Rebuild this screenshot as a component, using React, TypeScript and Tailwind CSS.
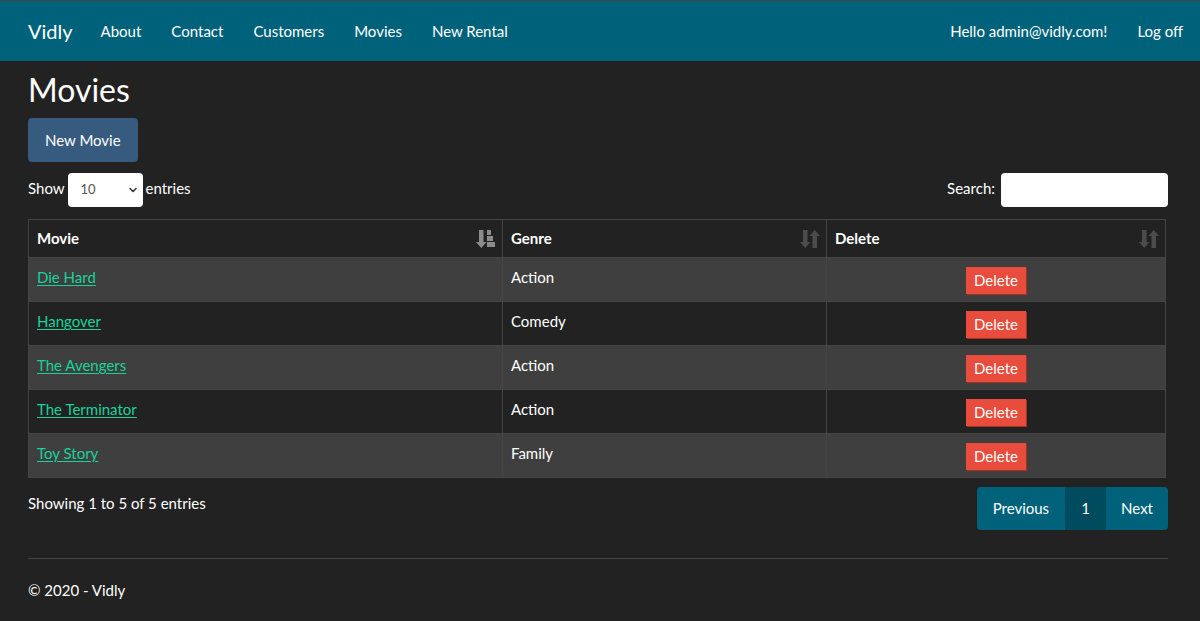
import { ChevronDown } from 'lucide-react';

const MOVIES = [
  { name: 'Die Hard', genre: 'Action' },
  { name: 'Hangover', genre: 'Comedy' },
  { name: 'The Avengers', genre: 'Action' },
  { name: 'The Terminator', genre: 'Action' },
  { name: 'Toy Story', genre: 'Family' },
];

function SortIcon({ active }: { active?: boolean }) {
  return (
    <svg width="20" height="20" viewBox="0 0 20 20" className="shrink-0">
      {/* down arrow */}
      <path d="M3 1h4.5v12h3L5.25 19 0 13h3z" fill={active ? '#8c8c8c' : '#4c4c4c'} />
      {active ? (
        <g fill="#8c8c8c">
          <rect x="11" y="1" width="4" height="5" />
          <rect x="11" y="7" width="6" height="5" />
          <rect x="11" y="13" width="8" height="5" />
        </g>
      ) : (
        <path d="M12.5 19H17V7h3L14.75 1 9.5 7h3z" fill="#4c4c4c" />
      )}
    </svg>
  );
}

export default function App() {
  return (
    <div className="min-h-screen bg-[#222222] text-white text-[15px]" style={{ fontFamily: 'Lato, "Open Sans", sans-serif' }}>
      {/* Navbar */}
      <nav className="h-[61px] bg-[#00627a] border-t border-[#444]">
        <div className="flex items-center h-full px-[28px]">
          <span className="text-[20px] mr-[13px]">Vidly</span>
          <ul className="flex items-center">
            {['About', 'Contact', 'Customers', 'Movies', 'New Rental'].map((l) => (
              <li key={l} className="px-[15px]">{l}</li>
            ))}
          </ul>
          <div className="ml-auto flex items-center mr-[-11px]">
            <span className="px-[15px]">Hello admin@vidly.com!</span>
            <span className="pl-[15px]">Log off</span>
          </div>
        </div>
      </nav>

      <main className="pl-[28px] pr-[32px]">
        <h1 className="text-[32px] leading-[40px] mt-[9px] mb-[8px]">Movies</h1>
        <button className="bg-[#375a7f] rounded-[4px] h-[44px] px-[17px] text-[15px]">New Movie</button>

        <div className="flex items-center justify-between mt-[11px] mb-[12px]">
          <div className="flex items-center gap-[3px]">
            <span className="mb-[4px]">Show</span>
            <div className="relative w-[75px] h-[34px] bg-white rounded-[4px] text-[#555] text-[13px] flex items-center pl-[13px]">
              10
              <ChevronDown className="absolute right-[4px] top-[11px] w-[12px] h-[12px] text-[#333]" strokeWidth={3} />
            </div>
            <span className="mb-[4px]">entries</span>
          </div>
          <div className="flex items-center gap-[6px]">
            <span className="mb-[4px]">Search:</span>
            <div className="w-[167px] h-[34px] bg-white rounded-[4px]" />
          </div>
        </div>

        <table className="w-[1138px] border-collapse border border-[#444]">
          <thead>
            <tr className="h-[38px]">
              <th className="w-[474px] border border-[#444] pl-[8px] pr-[6px] text-left font-bold">
                <div className="flex items-center justify-between"><span>Movie</span><SortIcon active /></div>
              </th>
              <th className="w-[324px] border border-[#444] pl-[8px] pr-[6px] text-left font-bold">
                <div className="flex items-center justify-between"><span>Genre</span><SortIcon /></div>
              </th>
              <th className="border border-[#444] pl-[8px] pr-[6px] text-left font-bold">
                <div className="flex items-center justify-between"><span>Delete</span><SortIcon /></div>
              </th>
            </tr>
          </thead>
          <tbody>
            {MOVIES.map((m, i) => (
              <tr key={m.name} className={`h-[44px] ${i % 2 === 0 ? 'bg-[#3f3f3f]' : 'bg-[#222222]'}`}>
                <td className="border border-[#444] px-[8px] align-top pt-[8px]">
                  <a className="text-[#1ad29b] underline underline-offset-[2px]">{m.name}</a>
                </td>
                <td className="border border-[#444] px-[8px] align-top pt-[8px]">{m.genre}</td>
                <td className="border border-[#444] px-[8px] text-center align-top pt-[9px]">
                  <button className="bg-[#e74c3c] px-[8px] h-[27px] text-[15px] shadow-[1px_1px_0_#a53125] leading-[27px]">Delete</button>
                </td>
              </tr>
            ))}
          </tbody>
        </table>

        <div className="flex items-start justify-between mt-[9px]">
          <span className="mt-[5px]">Showing 1 to 5 of 5 entries</span>
          <div className="flex h-[43px] rounded-[4px] overflow-hidden">
            <span className="bg-[#00627a] px-[16px] flex items-center">Previous</span>
            <span className="bg-[#004b5e] w-[41px] flex items-center justify-center">1</span>
            <span className="bg-[#00627a] px-[15px] flex items-center">Next</span>
          </div>
        </div>

        <hr className="mt-[28px] border-[#444]" />
        <footer className="pt-[20px] pb-[22px]">© 2020 - Vidly</footer>
      </main>
    </div>
  );
}
